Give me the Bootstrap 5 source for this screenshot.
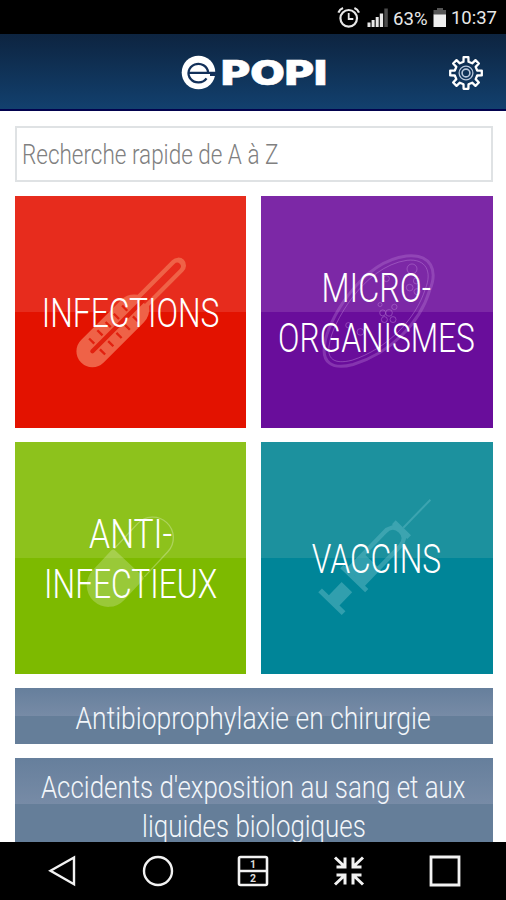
<!DOCTYPE html>
<html lang="fr">
<head>
<meta charset="utf-8">
<meta name="viewport" content="width=device-width, initial-scale=1">
<title>ePOPI</title>
<link href="https://cdn.jsdelivr.net/npm/bootstrap@5.3.0/dist/css/bootstrap.min.css" rel="stylesheet">
<style>
body{font-family:Roboto,"Liberation Sans",sans-serif;background:#fff;height:900px}
.status-bar{height:34px;background:#000;color:#e8e8e8;padding-right:9px}
.clock{font-size:18.5px;line-height:37px;margin-left:3px}
.app-bar{height:77px;background:linear-gradient(#0d2440,#12406e);border-bottom:2px solid #02024e;padding:2px 22px 0 0}
.side-slot{width:36px}
.brand{gap:5px;padding-left:24px}
.brand-name{font-family:Inter,sans-serif;font-weight:900;font-size:34px;line-height:38px;width:106px;-webkit-text-stroke:.5px #fff}
.fit{display:inline-block;white-space:nowrap;transform:scaleX(var(--sx));transform-origin:50% 50%}
.fit-start{transform-origin:0 50%}
.content-area{padding:14.5px 13.5px 0 14.5px;gap:14.5px}
.search{height:56px;border:2px solid #dfe2e4;padding:4px 0 0 5px;color:#808080;font-size:27px;font-weight:300}
.tiles{display:grid;grid-template-columns:repeat(2,minmax(0,1fr));gap:14.5px}
.tile{height:231.5px;font-size:41px;line-height:50px;font-weight:300;padding-top:3px}
.tile svg{left:0;top:0}
.t-red{background:linear-gradient(#e72c1d 50%,#e31200 50%)}
.t-purple{background:linear-gradient(#7c28a6 50%,#690d9b 50%)}
.t-green{background:linear-gradient(#8dc21c 50%,#7dba00 50%)}
.t-teal{background:linear-gradient(#1c919e 50%,#008598 50%)}
.bar-link{font-size:31px;line-height:39px;font-weight:300;color:#f2f6fa;background:linear-gradient(#667f9c,#778ba6 50%,#657e99 50%,#657e99)}
.bar-one{height:55.5px;padding-top:11px}
.bar-two{height:92px;padding-top:9.5px}
.nav-keys{height:58px;background:#000;padding:0 13.5px 0 14.5px}
.w-acc{--sx:.835}.w-ant{--sx:.853}.w-liq{--sx:.835}
.w-search{--sx:.833}.w-inf{--sx:.775}.w-mic{--sx:.79}.w-org{--sx:.772}.w-anti{--sx:.82}.w-vac{--sx:.775}.w-popi{--sx:1.31}
</style>
<script src="https://cdn.jsdelivr.net/npm/bootstrap@5.3.0/dist/js/bootstrap.bundle.min.js"></script>
</head>
<body class="d-flex flex-column overflow-hidden">
<div class="status-bar d-flex justify-content-end flex-shrink-0">
  <svg class="flex-shrink-0" width="113" height="34" viewBox="334 0 113 34">
    <g fill="none" stroke="#e8e8e8">
      <circle cx="347.7" cy="18.3" r="8.3" stroke-width="2.2"/>
      <path d="M347.7 13v6h4.6" stroke-width="1.8"/>
      <path d="M337.4 12.6q1.2-3.2 4.6-4.6M358 12.6q-1.2-3.2-4.6-4.6" stroke-width="2.2"/>
    </g>
    <path fill="#e8e8e8" d="M366.5 22.5h3V27h-3zM370.6 20h3v7h-3zM374.7 17h3v10h-3zM378.8 13.5h3.3V27h-3.3z"/>
    <path fill="#4c4c4c" d="M383.300 8.500h3.500V27h-3.500z"/>
    <path fill="#555" d="M436 8h6v2h3v5h-12.500v-5h3.500z"/>
    <path fill="#eee" d="M432.500 14.500h12.500V27h-12.500z"/>
    <text x="392" y="25" font-size="18.5" fill="#e8e8e8" textLength="34.5" lengthAdjust="spacingAndGlyphs">63%</text>
  </svg>
  <span class="clock">10:37</span>
</div>
<header class="app-bar d-flex align-items-center justify-content-between flex-shrink-0 text-white">
  <span class="side-slot"></span>
  <div class="brand d-flex align-items-center">
    <svg width="35" height="35" viewBox="-17.5 -17.5 35 35">
      <circle r="16.8" fill="#fff"/>
      <path d="M-9.500.3H17.500M9.600 0A9.800 9.300 0 1 0 8 5.800" fill="none" stroke="#12305a" stroke-width="2.3"/>
      <path d="M11.500 1.500h5.500v2h-5.500z" fill="#12305a"/>
    </svg>
    <div class="brand-name"><span class="fit fit-start w-popi">POPI</span></div>
  </div>
  <svg width="36" height="36" viewBox="-18 -18 36 36" fill="none" stroke="#fff" stroke-linejoin="round">
    <path stroke-width="2.3" d="M-2.500-11.200L-2.400-15.800H2.400L2.500-11.200L6.150-9.690L9.470-12.870L12.870-9.470L9.690-6.150L11.200-2.500L15.800-2.400V2.400L11.200 2.500L9.690 6.150L12.870 9.470L9.470 12.870L6.150 9.690L2.500 11.200L2.400 15.800H-2.400L-2.500 11.200L-6.150 9.690L-9.470 12.870L-12.870 9.470L-9.690 6.150L-11.200 2.500L-15.800 2.400V-2.400L-11.200-2.500L-9.690-6.150L-12.870-9.470L-9.470-12.870L-6.150-9.690Z"/>
    <g stroke="#b9c8dc"><circle r="6.9" stroke-width="1.3"/><circle r="3.9" stroke-width="1.6"/></g>
  </svg>
</header>
<main class="content-area d-flex flex-column flex-grow-1 overflow-hidden">
  <div class="search d-flex align-items-center flex-shrink-0"><span class="fit fit-start w-search">Recherche rapide de A à Z</span></div>
  <div class="tiles flex-shrink-0">
    <div class="tile t-red position-relative d-flex flex-column align-items-center justify-content-center text-white">
      <svg class="position-absolute w-100 h-100" viewBox="14 17 695 695">
        <g transform="translate(246 483) rotate(45)">
          <path fill="#ef6247" fill-rule="evenodd" d="M-48 0V-170Q-48-198-24-216V-362A24 26 0 0 1 24-362V-216Q48-198 48-170V0A48 48 0 0 1-48 0ZM-11-212H11V-359A11 12 0 0 0-11-359Z"/>
          <path stroke="#e2210f" stroke-width="13" stroke-linecap="round" d="M0 0V-212"/>
          <path stroke="#e2210f" stroke-width="7" d="M-34-20H-12M12-20H34M-34-55H-12M12-55H34M-34-90H-12M12-90H34M-34-125H-12M12-125H34M-34-160H-12M12-160H34"/>
        </g>
      </svg>
      <span class="fit w-inf position-relative">INFECTIONS</span>
    </div>
    <div class="tile t-purple position-relative d-flex flex-column align-items-center justify-content-center text-white">
      <svg class="position-absolute w-100 h-100" viewBox="14 17 695 695" fill="none" stroke="#b77bd3" stroke-opacity=".5">
        <path stroke-width="9" stroke-opacity=".36" d="M205 462C210 400 310 215 450 197C525 190 545 240 520 300C490 400 400 490 290 523C225 540 195 515 205 462Z"/>
        <path stroke-width="3" d="M219 462C225 405 320 228 452 210C510 204 528 245 507 296C478 388 392 476 287 510C232 524 210 505 219 462Z"/>
        <g stroke-width="3"><circle cx="467" cy="236" r="15"/><circle cx="480" cy="272" r="9"/><circle cx="460" cy="292" r="10"/><circle cx="482" cy="304" r="9"/><circle cx="398" cy="368" r="10"/><circle cx="414" cy="350" r="8"/><circle cx="379" cy="368" r="9"/><circle cx="384" cy="388" r="9"/><circle cx="410" cy="388" r="9"/><circle cx="371" cy="343" r="6"/><circle cx="390" cy="265" r="9"/><circle cx="276" cy="405" r="8"/><circle cx="312" cy="425" r="10"/></g>
      </svg>
      <span class="fit w-mic position-relative">MICRO-</span>
      <span class="fit w-org position-relative">ORGANISMES</span>
    </div>
    <div class="tile t-green position-relative d-flex flex-column align-items-center justify-content-center text-white">
      <svg class="position-absolute w-100 h-100" viewBox="14 17 695 695">
        <g transform="translate(294 447) rotate(43)">
          <path fill="#fff" fill-opacity=".22" d="M-65 0V-82Q-65-90-57-90H57Q65-90 65-82V0A65 65 0 0 1-65 0Z"/>
          <path fill="none" stroke="#fff" stroke-opacity=".28" stroke-width="4" d="M-62-92V-195A62 62 0 0 1 62-195V-92"/>
        </g>
      </svg>
      <span class="fit w-anti position-relative">ANTI-</span>
      <span class="fit w-inf position-relative">INFECTIEUX</span>
    </div>
    <div class="tile t-teal position-relative d-flex flex-column align-items-center justify-content-center text-white">
      <svg class="position-absolute w-100 h-100" viewBox="14 17 695 695">
        <g transform="translate(227 496) rotate(44)" fill="#52b0bd" fill-opacity=".6">
          <path d="M-49-7H49V9H-49zM-20-7V-62H24V-7z"/>
          <path fill-rule="evenodd" d="M-52-103H52V-89H-52zM-38-103V-270L-28-292H-32V-308H32V-292H28L38-270V-103zM-25-170H25V-262Q25-288 0-288Q-25-288-25-262z"/>
          <path d="M-3-308V-425H3V-308z"/>
        </g>
      </svg>
      <span class="fit w-vac position-relative">VACCINS</span>
    </div>
  </div>
  <div class="bar-link bar-one d-flex flex-column align-items-center flex-shrink-0"><span class="fit w-ant">Antibioprophylaxie en chirurgie</span></div>
  <div class="bar-link bar-two d-flex flex-column align-items-center flex-shrink-0"><span class="fit w-acc">Accidents d'exposition au sang et aux</span><span class="fit w-liq">liquides biologiques</span></div>
</main>
<nav class="nav-keys d-flex flex-shrink-0 align-items-center text-center">
  <div class="col d-flex justify-content-center"><svg width="32" height="32" viewBox="0 0 32 32" fill="none" stroke="#f2f2f2" stroke-width="2.4"><path d="M4.500 15.700L28 2.500V29.200Z"/></svg></div>
  <div class="col d-flex justify-content-center"><svg width="32" height="32" viewBox="0 0 32 32" fill="none" stroke="#f2f2f2" stroke-width="2.4"><circle cx="16" cy="16" r="14"/></svg></div>
  <div class="col d-flex justify-content-center"><svg width="32" height="32" viewBox="0 0 32 32"><path d="M2 16H30M3.500 2H28.500Q30 2 30 3.500V28.500Q30 30 28.500 30H3.500Q2 30 2 28.500V3.500Q2 2 3.500 2Z" fill="none" stroke="#f2f2f2" stroke-width="2.6"/><text x="16" y="13" font-size="10.5" font-weight="700" fill="#ddd" text-anchor="middle">1</text><text x="16" y="27.3" font-size="10.5" font-weight="700" fill="#ddd" text-anchor="middle">2</text></svg></div>
  <div class="col d-flex justify-content-center"><svg width="32" height="32" viewBox="0 0 32 32" fill="none" stroke="#f2f2f2" stroke-width="3"><path d="M2 2.500L11.500 11.500M3.500 12H12V2.500M30 2.500L20.500 11.500M28.500 12H20V2.500M2 29.500L11.500 20.500M3.500 20H12V29.500M30 29.500L20.500 20.500M28.500 20H20V29.500"/></svg></div>
  <div class="col d-flex justify-content-center"><svg width="32" height="32" viewBox="0 0 32 32" fill="none" stroke="#f2f2f2" stroke-width="2.8"><path d="M2 2H30V30H2Z"/></svg></div>
</nav>
</body>
</html>
